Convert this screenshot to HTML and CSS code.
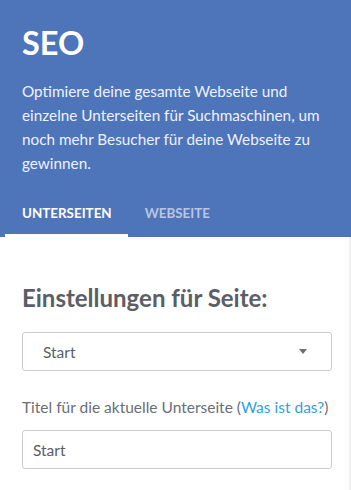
FILE: index.html
```html
<!DOCTYPE html>
<html lang="de">
<head>
    <meta charset="UTF-8">
    <meta name="viewport" content="width=device-width, initial-scale=1.0">
    <title>SEO</title>
    <link rel="stylesheet" href="styles.css">
</head>
<body>
    <!-- Header -->
    <header class="seo-header">
        <h1>SEO</h1>
        <p>Optimiere deine gesamte Webseite und einzelne Unterseiten für Suchmaschinen, um noch mehr Besucher für deine Webseite zu gewinnen.</p>
        <nav class="tabs">
            <a href="#" class="tab active">Unterseiten</a>
            <a href="#" class="tab">Webseite</a>
        </nav>
    </header>

    <!-- Settings -->
    <main class="settings">
        <h2>Einstellungen für Seite:</h2>
        <div class="select">
            <span>Start</span>
            <span class="caret"></span>
        </div>
        <label class="field-label">Titel für die aktuelle Unterseite (<a href="#">Was ist das?</a>)</label>
        <div class="input">Start</div>
    </main>
</body>
</html>
```

FILE: styles.css
```css
body {
    margin: 0;
    padding: 0;
    font-family: Lato, "Open Sans", sans-serif;
    background: #fff;
    overflow: hidden;
}

/* Header */
.seo-header {
    background: #4e74b9;
    color: #fff;
    padding: 23px 0 0 0;
}

.seo-header h1 {
    margin: 0 22px;
    font-size: 32.5px;
    font-weight: 700;
    line-height: 40px;
}

.seo-header p {
    margin: 16px 22px 0 22px;
    font-size: 15.3px;
    line-height: 24px;
    color: #eef2fa;
}

.tabs {
    display: flex;
    margin-top: 30px;
    padding-left: 5px;
}

.tab {
    display: block;
    padding: 0 16px 13px 17px;
    font-size: 13.4px;
    font-weight: 700;
    text-transform: uppercase;
    text-decoration: none;
    color: rgba(255, 255, 255, 0.6);
    line-height: 16px;
    border-bottom: 3px solid transparent;
}

.tab.active {
    color: #fff;
    border-bottom-color: #fff;
}

/* Settings */
.settings {
    padding: 46px 17px 40px 22px;
    border-right: 2px solid #f1f1f3;
}

.settings h2 {
    margin: 0 0 20px 0;
    font-size: 24px;
    font-weight: 700;
    color: #5b5e66;
}

.select, .input {
    border: 1.5px solid #c9cbd6;
    border-radius: 3px;
    display: flex;
    align-items: center;
    font-size: 15.5px;
    color: #5b5e66;
    box-sizing: border-box;
    height: 39px;
}

.select {
    justify-content: space-between;
    padding: 0 24px 0 20px;
}

.caret {
    width: 0;
    height: 0;
    border-left: 4.5px solid transparent;
    border-right: 4.5px solid transparent;
    border-top: 5px solid #6b6e76;
}

.field-label {
    display: block;
    margin: 27px 0 14px 0;
    font-size: 15.5px;
    color: #6b6e76;
}

.field-label a {
    color: #2ea2d9;
    text-decoration: none;
}

.input {
    padding: 0 10px;
}
```
